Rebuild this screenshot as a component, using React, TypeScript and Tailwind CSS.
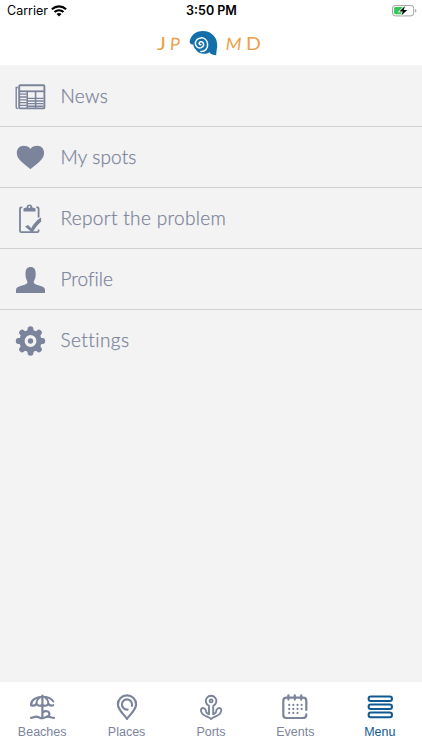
import React, { useState } from 'react';

interface MenuEntry {
  id: string;
  label: string;
  spacing: string;
  icon: React.ReactNode;
}

interface TabEntry {
  id: string;
  label: string;
  icon: React.ReactNode;
}

function NewsIcon() {
  return (
    <svg viewBox="0 0 32 32" className="h-8 w-8" fill="none" stroke="currentColor">
      <path d="M3.9 7.5H2.2V27.5Q2.2 28.5 3.9 28.5" strokeWidth="1.4" />
      <rect x="5.2" y="5.2" width="25.2" height="23.2" rx="1" strokeWidth="1.9" />
      <path d="M5 11.3H30" strokeWidth="1.8" />
      <path d="M13.2 12V28M21.6 12V28" strokeWidth="1.6" />
      <path d="M6 14.2H12.6M6 17H12.6M6 19.8H12.6M6 22.6H12.6M6 25.4H12.6" strokeWidth="1.3" />
      <path d="M14 18.4H29.5M14 21H29.5M14 23.6H29.5M14 26.2H29.5" strokeWidth="1.4" />
    </svg>
  );
}

function HeartIcon() {
  return (
    <svg viewBox="0 0 32 32" className="h-8 w-8" fill="currentColor">
      <path d="M16.4 28.2C14.9 26.6 12.4 25.1 9.5 22.6C5.5 19.2 2.8 16.2 2.8 11.8C2.8 7.6 5.8 4.8 9.5 4.8C12.7 4.8 15.2 6 16.4 8C17.6 6 20.2 4.8 23.4 4.8C27.1 4.8 30.1 7.6 30.1 11.8C30.1 16.2 27.4 19.2 23.4 22.6C20.5 25.1 18 26.6 16.4 28.2Z" />
    </svg>
  );
}

function ReportIcon() {
  return (
    <svg viewBox="0 0 32 32" className="h-8 w-8" fill="none" stroke="currentColor">
      <path d="M8.3 5.3H7.2Q6 5.3 6 6.5V29Q6 30.2 7.2 30.2H23.2Q24.6 30.2 24.6 29V27.6" strokeWidth="1.8" />
      <path d="M22.3 5.3H23.4Q24.6 5.3 24.6 6.5V15.6" strokeWidth="1.8" />
      <path d="M9.5 9.6V7.2Q9.5 6.2 10.5 6.1L12.6 5.5V4.8A2.9 2.9 0 0 1 18.3 4.8V5.5L20.4 6.1Q21.5 6.2 21.5 7.2V9.6Z" fill="currentColor" stroke="none" />
      <circle cx="15.4" cy="5" r="1" fill="#f3f3f3" stroke="none" />
      <path d="M11 24.5L14.2 22.9L17.2 26.3C19.3 22.5 22.3 18.5 27 15.6L27.2 19.4C23.8 22.5 21 26 18.3 30.7Z" fill="currentColor" stroke="none" />
    </svg>
  );
}

function ProfileIcon() {
  return (
    <svg viewBox="0 0 32 32" className="h-8 w-8" fill="currentColor">
      <path d="M2 29.9V26.7C2 24.8 4.2 23.8 7.2 22.8C11 21.6 13.5 20.8 13.5 19.2C13.5 17.7 11.5 16.5 11.5 11C11.5 6.6 13 4 16.6 4C20.2 4 21.7 6.6 21.7 11C21.7 16.5 19.7 17.7 19.7 19.2C19.7 20.8 22.2 21.6 26 22.8C29 23.8 31 24.8 31 26.7V29.9Z" />
    </svg>
  );
}

function SettingsIcon() {
  const teeth = [0, 45, 90, 135, 180, 225, 270, 315];
  return (
    <svg viewBox="0 0 32 32" className="h-8 w-8" fill="none" stroke="currentColor">
      <circle cx="16.5" cy="17" r="8.5" strokeWidth="5.2" />
      {teeth.map((angle) => (
        <path
          key={angle}
          d="M12.4 8.2Q13.6 6.5 13.6 4.9Q13.6 2.3 16.5 2.3Q19.4 2.3 19.4 4.9Q19.4 6.5 20.6 8.2Z"
          transform={`rotate(${angle} 16.5 17)`}
          fill="currentColor"
          stroke="none"
        />
      ))}
      <circle cx="16.5" cy="17" r="2.7" fill="currentColor" stroke="none" />
    </svg>
  );
}

function BeachIcon() {
  return (
    <svg viewBox="0 0 28 28" className="h-7 w-7" fill="none" stroke="currentColor" strokeWidth="2.2" strokeLinecap="round" strokeLinejoin="round">
      <path d="M14.4 2.6V24M14.4 3.8C7.5 3.8 3 7.4 3 12.3C5.3 13.2 7.3 12.4 8.4 11C10.3 13.2 12.6 13.2 14.4 11.6C16.2 13.2 18.7 13.2 20.4 11C21.4 12.4 23 13 25.2 12.2" />
      <path d="M14.4 3.8C19.2 3.8 23.5 5.7 25.4 8.6M11.6 4.5C9.2 6.3 8.4 8.4 8.4 11M17.2 4.5C19.6 6.3 20.4 8.4 20.4 11" strokeWidth="1.9" />
      <path d="M3 24.8C5.5 24.8 5.6 23.6 8.2 23.6C11 23.6 11.4 25.2 14.2 25.2C17 25.2 17.4 23.6 20 23.6C22.5 23.6 23 24.8 26 24.8" />
      <path d="M15 19.2C17 17.4 21.4 18 21.4 21C21.4 22.5 20.4 23.3 19 23.8" />
    </svg>
  );
}

function PlaceIcon() {
  return (
    <svg viewBox="0 0 28 28" className="h-7 w-7" fill="none" stroke="currentColor" strokeWidth="2.2" strokeLinecap="round" strokeLinejoin="round">
      <path d="M14 25.8C11.2 22 4.9 16.2 4.9 11.4A9.1 9 0 0 1 23.1 11.4C23.1 16.2 16.8 22 14 25.8Z" />
      <path d="M14.6 16.6A5.1 5.1 0 1 1 19.1 11.8Q19.1 12.2 18.9 12.8" />
    </svg>
  );
}

function PortIcon() {
  return (
    <svg viewBox="0 0 28 28" className="h-7 w-7" fill="none" stroke="currentColor" strokeWidth="1.9" strokeLinecap="round" strokeLinejoin="round">
      <path d="M12 21.3V12.9A5.3 5.3 0 1 1 16.2 12.9V21.3Q18.8 20.7 19.2 18.2C19.4 15.7 21.8 14.5 23.4 15.4C25.1 16.4 24.2 19.2 22.5 21.1C20.3 23.3 16.8 23.8 14.1 25.9C11.4 23.8 7.9 23.3 5.7 21.1C4 19.2 3.1 16.4 4.8 15.4C6.4 14.5 8.8 15.7 9 18.2Q9.4 20.7 12 21.3Z" />
      <circle cx="14.1" cy="7.9" r="1.5" strokeWidth="1.9" />
    </svg>
  );
}

function EventIcon() {
  return (
    <svg viewBox="0 0 28 28" className="h-7 w-7" fill="none" stroke="currentColor" strokeWidth="2.2" strokeLinecap="round">
      <path d="M25.3 17V7.7Q25.3 4.6 22.2 4.6H5.4Q2.3 4.6 2.3 7.7V22Q2.3 25 5.4 25H21.5Q25.3 25 25.3 21.4" />
      <path d="M7.4 2.3V6.6M13.8 2.3V6.6M20.2 2.3V6.6" />
      <path d="M8.2 11.9H20.8M8.2 15.9H20.8M8.2 19.9H17" strokeWidth="2.2" strokeDasharray="0 4.15" />
    </svg>
  );
}

function MenuIcon() {
  return (
    <svg viewBox="0 0 28 28" className="h-7 w-7" fill="none" stroke="currentColor" strokeWidth="2">
      <rect x="2.6" y="3.4" width="23.4" height="4.6" rx="2.3" />
      <rect x="2.6" y="11.5" width="23.4" height="4.6" rx="2.3" />
      <rect x="2.6" y="19.6" width="23.4" height="4.6" rx="2.3" />
    </svg>
  );
}

function ShellLogo() {
  return (
    <svg viewBox="0 0 30 28" className="h-7 w-[30px] shrink-0" fill="none">
      <path d="M.6 13.2C1.2 6.6 6.8 2 13.8 2C22.6 2 28.2 8.4 28.2 16C28.2 19.6 27.3 22 27.2 26.2C24.6 26.2 22 25.4 20.4 23.2C16.5 25.8 9.6 25.4 6.8 20.6C5.2 19.2 4.5 17.6 4.3 15.6C2.6 15.4 1 14.8 .6 13.2Z" fill="#126fa9" />
      <path
        d="M11.8 22.4C16.2 22.8 19 19.2 18.6 15C18.2 11 15.2 8.5 11.8 8.9C8.3 9.3 6 12 6.4 15.1C6.8 18 9.7 19.6 12.3 18.6C14.7 17.6 15.3 15 13.9 13.4C12.6 12.1 10.4 12.6 10.1 14.3C10 15.3 10.9 16 11.9 15.5"
        stroke="#fff"
        strokeWidth="1.5"
        strokeLinecap="round"
      />
    </svg>
  );
}

function WifiIcon() {
  return (
    <svg viewBox="0 0 16 12" className="h-3 w-4" fill="none" stroke="#000" strokeWidth="2.1">
      <path d="M.9 4.2A10.4 10.4 0 0 1 15.1 4.2" />
      <path d="M3.5 7.1A6.5 6.5 0 0 1 12.5 7.1" />
      <path d="M8 11.6L5.5 9.1A3.6 3.6 0 0 1 10.5 9.1Z" fill="#000" stroke="none" />
    </svg>
  );
}

function BatteryIcon() {
  return (
    <svg viewBox="0 0 26 12" className="h-3 w-[26px]" fill="none">
      <rect x="1.5" y="0.5" width="21.2" height="10.4" rx="2.8" stroke="#a3a3a3" />
      <path d="M24.1 3.9Q25.4 4.3 25.4 5.7Q25.4 7.1 24.1 7.5Z" fill="#a3a3a3" />
      <rect x="3.1" y="2.1" width="9.2" height="7.2" rx="1.3" fill="#34c759" />
      <path d="M14 1L8.4 6.5H11.8L10.4 10.6L16.2 4.9H12.7Z" fill="#000" stroke="#fff" strokeWidth="1.4" paintOrder="stroke" />
    </svg>
  );
}

const menuEntries: MenuEntry[] = [
  { id: 'news', label: 'News', spacing: 'tracking-[0.3px]', icon: <NewsIcon /> },
  { id: 'spots', label: 'My spots', spacing: 'tracking-[0.15px]', icon: <HeartIcon /> },
  { id: 'report', label: 'Report the problem', spacing: 'tracking-[0.35px]', icon: <ReportIcon /> },
  { id: 'profile', label: 'Profile', spacing: 'tracking-[0.05px]', icon: <ProfileIcon /> },
  { id: 'settings', label: 'Settings', spacing: 'tracking-[0.45px]', icon: <SettingsIcon /> },
];

const tabs: TabEntry[] = [
  { id: 'beaches', label: 'Beaches', icon: <BeachIcon /> },
  { id: 'places', label: 'Places', icon: <PlaceIcon /> },
  { id: 'ports', label: 'Ports', icon: <PortIcon /> },
  { id: 'events', label: 'Events', icon: <EventIcon /> },
  { id: 'menu', label: 'Menu', icon: <MenuIcon /> },
];

function StatusBar() {
  return (
    <div className="grid h-[22px] grid-cols-3 items-center pl-[7px] pr-[5px] font-['Inter',sans-serif] text-black">
      <div className="flex items-center gap-[3px]">
        <span className="text-[12.5px] leading-none">Carrier</span>
        <WifiIcon />
      </div>
      <span className="pr-px text-center text-[12.5px] font-semibold leading-none">3:50 PM</span>
      <div className="flex justify-end">
        <BatteryIcon />
      </div>
    </div>
  );
}

// Brand line: letters on both sides of the shell
function Brand() {
  return (
    <div className="flex h-[42px] items-center pl-[157px] font-['Lato',sans-serif] text-[17px] leading-none text-[#eba04a]">
      <div className="flex w-8 gap-1">
        <span className="w-[9px] scale-x-125 text-center">J</span>
        <span className="w-2.5 skew-x-[-4deg]">P</span>
      </div>
      <ShellLogo />
      <div className="flex gap-[5px] pl-[7px]">
        <span className="w-[15px] skew-x-[-8deg]">M</span>
        <span className="origin-left scale-x-[1.15]">D</span>
      </div>
    </div>
  );
}

export default function App() {
  const [activeTab, setActiveTab] = useState('menu');

  return (
    <div className="flex h-[750px] w-[422px] flex-col overflow-hidden bg-[#f3f3f3]">
      <header className="h-[66px] border-b border-[#f5f5f5] bg-white">
        <StatusBar />
        <Brand />
      </header>

      <nav className="flex-1">
        {menuEntries.map((entry, idx) => (
          <button
            key={entry.id}
            className={`flex w-full items-center gap-3.5 pl-3.5 text-[#7b849b] ${
              idx < menuEntries.length - 1 ? 'h-[61px] border-b border-[#d0d0d0]' : 'h-[60px]'
            }`}
          >
            {entry.icon}
            <span
              className={`whitespace-nowrap pl-[0.5px] font-['Lato',sans-serif] text-[19px] font-light leading-6 [-webkit-text-stroke:0.25px_#7b849b] ${entry.spacing}`}
            >
              {entry.label}
            </span>
          </button>
        ))}
      </nav>

      <footer className="grid h-[68px] grid-cols-5 bg-white">
        {tabs.map((tab) => (
          <button
            key={tab.id}
            onClick={() => setActiveTab(tab.id)}
            className={`flex flex-col items-center pt-[10.5px] ${
              activeTab === tab.id ? 'text-[#115a91]' : 'text-[#7b849b]'
            }`}
          >
            {tab.icon}
            <span className="mt-[3px] font-['Liberation_Sans',sans-serif] text-[12.5px] leading-4">{tab.label}</span>
          </button>
        ))}
      </footer>
    </div>
  );
}
